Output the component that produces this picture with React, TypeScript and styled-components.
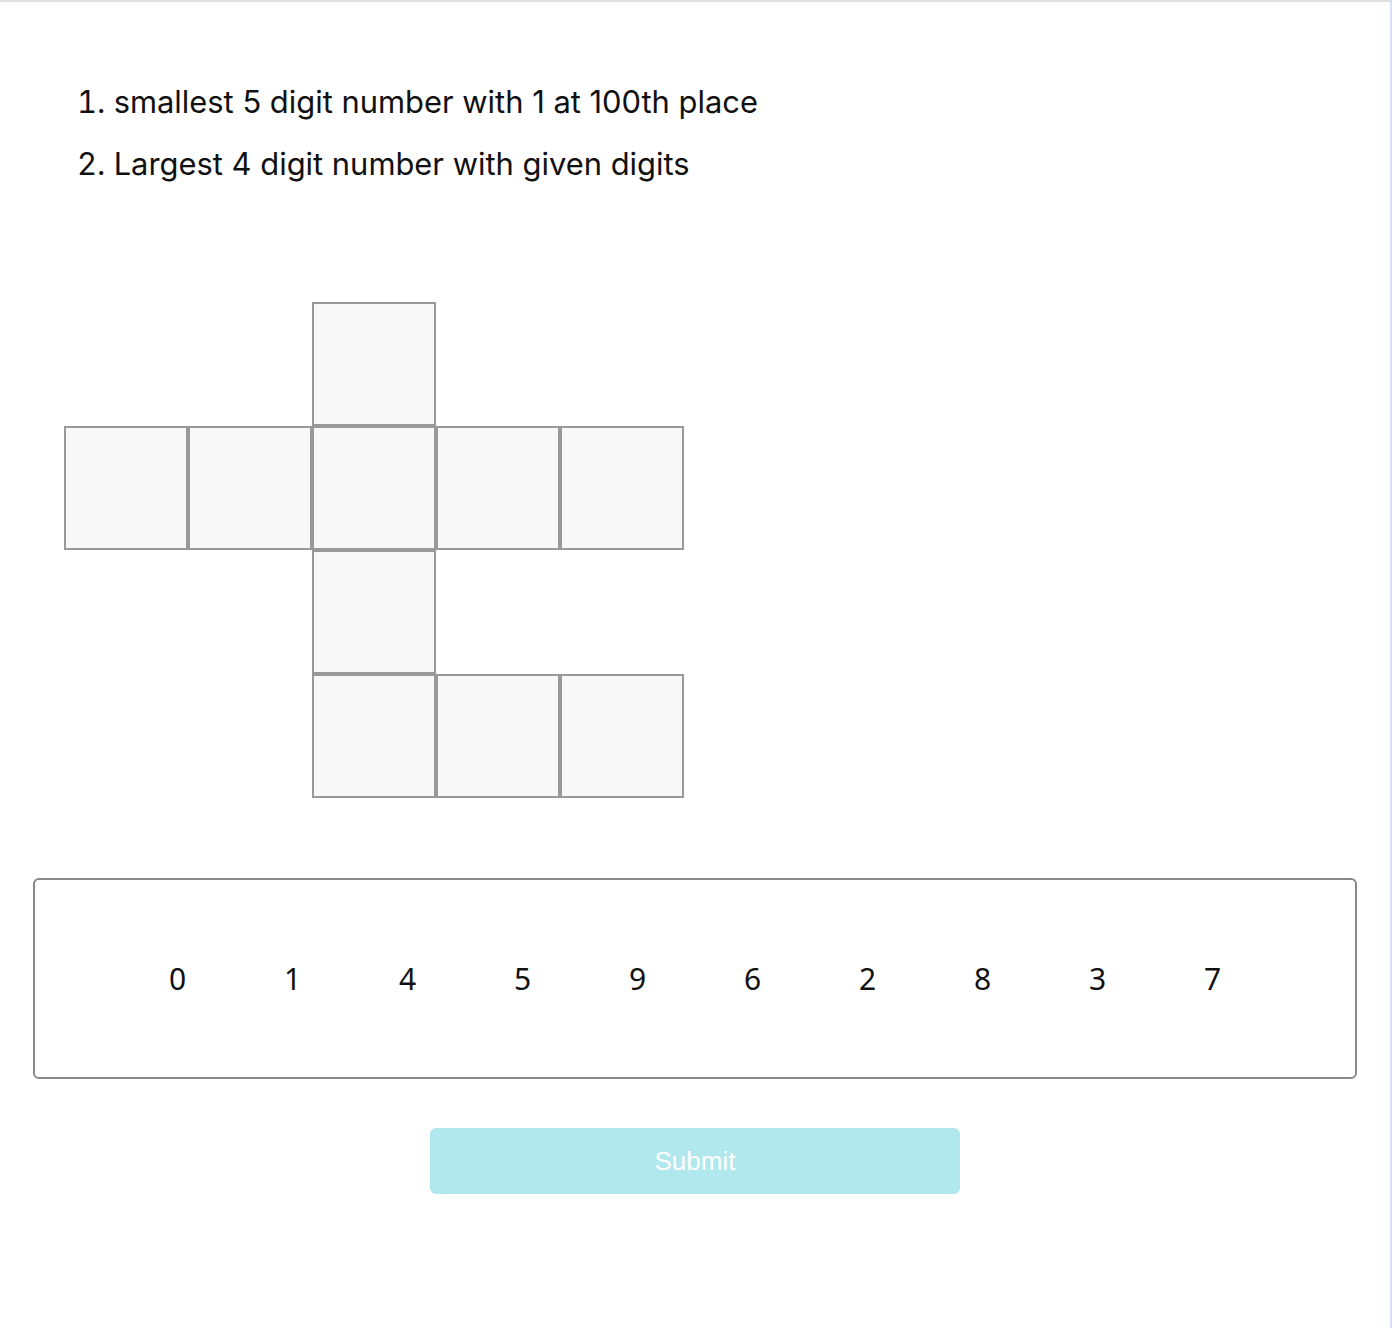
import React from "react";
import styled, { createGlobalStyle } from "styled-components";

const Global = createGlobalStyle`
  html, body { margin: 0; padding: 0; background: #ffffff; }
  * { box-sizing: border-box; }
`;

const Page = styled.div`
  min-height: 1328px;
  width: 1392px;
  border-top: 2px solid #dedede;
  border-right: 2px solid #d6e1f7;
  background: #ffffff;
  padding-top: 83px;
`;

const Questions = styled.ol`
  margin: 0;
  padding: 0 0 0 77px;
  list-style: decimal inside;
  font-family: Inter, "Noto Sans", sans-serif;
  font-size: 30.9px;
  color: #111111;
`;

const Question = styled.li`
  line-height: 34px;
  margin-bottom: 28px;
`;

const Net = styled.div`
  display: grid;
  grid-template-columns: repeat(5, 124px);
  grid-template-rows: repeat(4, 124px);
  margin: 121px 0 0 64px;
  width: max-content;
`;

const Cell = styled.div<{ $col: number; $row: number }>`
  grid-column: ${(p) => p.$col};
  grid-row: ${(p) => p.$row};
  background: #f8f8f8;
  border: 2px solid #999999;
`;

const DigitTray = styled.div`
  margin: 80px 0 0 33px;
  width: 1324px;
  height: 201px;
  border: 2px solid #888888;
  border-radius: 6px;
  display: flex;
  align-items: center;
  justify-content: center;
`;

const Digit = styled.span`
  width: 115px;
  text-align: center;
  font-family: "Noto Sans", "Open Sans", sans-serif;
  font-size: 30px;
  color: #111111;
`;

const SubmitRow = styled.div`
  display: flex;
  justify-content: center;
  margin-top: 49px;
`;

const SubmitButton = styled.button`
  width: 530px;
  height: 66px;
  border: none;
  border-radius: 6px;
  background: #b1e8ed;
  color: #ffffff;
  font-family: "Liberation Sans", Arial, sans-serif;
  font-size: 26px;
  cursor: pointer;
`;

const cells: [number, number][] = [
  [3, 1],
  [1, 2],
  [2, 2],
  [3, 2],
  [4, 2],
  [5, 2],
  [3, 3],
  [3, 4],
  [4, 4],
  [5, 4],
];

const digits = ["0", "1", "4", "5", "9", "6", "2", "8", "3", "7"];

export default function App() {
  return (
    <>
      <Global />
      <Page>
        <Questions>
          <Question>smallest 5 digit number with 1 at 100th place</Question>
          <Question>Largest 4 digit number with given digits</Question>
        </Questions>
        <Net>
          {cells.map(([c, r]) => (
            <Cell key={`${c}-${r}`} $col={c} $row={r} />
          ))}
        </Net>
        <DigitTray>
          {digits.map((d) => (
            <Digit key={d}>{d}</Digit>
          ))}
        </DigitTray>
        <SubmitRow>
          <SubmitButton>Submit</SubmitButton>
        </SubmitRow>
      </Page>
    </>
  );
}
